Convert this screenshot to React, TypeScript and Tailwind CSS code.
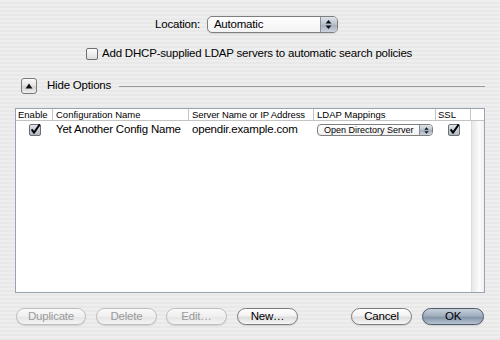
import React from "react";

const font = "font-['Liberation_Sans',Arial,sans-serif]";

function CheckBox({ checked = false }: { checked?: boolean }) {
  return (
    <svg width="12" height="12" viewBox="0 0 12 12" className="shrink-0 overflow-visible">
      <defs>
        <linearGradient id={checked ? "cbOn" : "cbOff"} x1="0" y1="0" x2="0" y2="1">
          <stop offset="0" stopColor={checked ? "#e4e8ee" : "#ffffff"} />
          <stop offset="1" stopColor={checked ? "#a9b3c0" : "#dcdcdc"} />
        </linearGradient>
      </defs>
      <rect x="0.5" y="0.5" width="11" height="11" rx="1.5" fill={`url(#${checked ? "cbOn" : "cbOff"})`} stroke="#6f6f6f" />
      {checked && <path d="M2.6 5.4 L5 8.6 L10.8 0.4" fill="none" stroke="#000" strokeWidth="1.9" />}
    </svg>
  );
}

function Arrows({ w = 7, h = 9 }: { w?: number; h?: number }) {
  return (
    <svg width={w} height={h} viewBox="0 0 7 9">
      <path d="M3.5 0 L6.5 3.5 L0.5 3.5 Z" fill="#111" />
      <path d="M3.5 9 L6.5 5.5 L0.5 5.5 Z" fill="#111" />
    </svg>
  );
}

function Button({ label, disabled = false, primary = false, width }: { label: string; disabled?: boolean; primary?: boolean; width: string }) {
  let cls = "border-[#7c7c7c] bg-[linear-gradient(#ffffff,#f2f2f2_45%,#dedede_55%,#f6f6f6)] text-black";
  if (disabled) cls = "border-[#bdbdbd] bg-[linear-gradient(#fafafa,#efefef_50%,#e6e6e6_55%,#f4f4f4)] text-[#9a9a9a]";
  if (primary) cls = "border-[#4f5a68] bg-[linear-gradient(#c6d0dc,#9eacbc_48%,#8394a8_55%,#b6c3d2)] text-black";
  return (
    <div className={`${width} h-[17px] rounded-full border flex items-center justify-center text-[11.5px] tracking-[-0.2px] leading-none shadow-[0_1px_1px_rgba(0,0,0,0.12)] ${cls}`}>
      {label}
    </div>
  );
}

export default function App() {
  return (
    <div className={`${font} w-[500px] h-[340px] overflow-hidden bg-[repeating-linear-gradient(#eeeeee_0px,#eeeeee_2px,#e8e8e8_2px,#e8e8e8_4px)] text-black`}>
      <div className="flex items-center pl-[155px] pt-[16px]">
        <span className="text-[11.5px] tracking-[-0.2px] leading-none">Location:</span>
        <div className="ml-[7px] w-[131px] h-[17px] rounded-[5px] border border-[#7e7e7e] bg-[linear-gradient(#ffffff,#f3f3f3)] flex items-stretch overflow-hidden shadow-[0_1px_1px_rgba(0,0,0,0.1)]">
          <span className="flex-1 pl-[6px] text-[11.5px] tracking-[-0.2px] leading-[15px]">Automatic</span>
          <div className="w-[17px] border-l border-[#8a8f96] bg-[linear-gradient(#dfe4ea,#b7c0cb_50%,#a6b0bd_55%,#ccd4dd)] flex items-center justify-center">
            <Arrows />
          </div>
        </div>
      </div>

      <div className="flex items-center gap-[4px] pl-[86px] mt-[15px] h-[12px]">
        <CheckBox />
        <span className="text-[11.5px] tracking-[-0.2px] leading-none whitespace-nowrap">Add DHCP-supplied LDAP servers to automatic search policies</span>
      </div>

      <div className="flex items-center pl-[21px] pr-[15px] mt-[18px] h-[16px]">
        <div className="w-[16px] h-[16px] rounded-[3px] border border-[#7a7a7a] bg-[linear-gradient(#fbfbfb,#e2e2e2_50%,#d2d2d2_55%,#efefef)] flex items-center justify-center">
          <svg width="8" height="6" viewBox="0 0 8 6">
            <path d="M4 0.5 L7.5 5.5 L0.5 5.5 Z" fill="#111" />
          </svg>
        </div>
        <span className="ml-[10px] text-[11.5px] tracking-[-0.2px] leading-none">Hide Options</span>
        <div className="ml-[8px] flex-1 h-px bg-[#9a9a9a]" />
      </div>

      <div className="ml-[15px] mt-[14px] w-[470px] h-[185px] border border-[#97a3b3] bg-white flex flex-col">
        <div className="grid grid-cols-[37px_136px_125px_122px_35px_13px] h-[12px] border-b border-[#c4c4c4] text-[9.5px] leading-[11px] text-black">
          <div className="border-r border-[#c4c4c4] pl-[2px] whitespace-nowrap overflow-hidden">Enable</div>
          <div className="border-r border-[#c4c4c4] pl-[3px] whitespace-nowrap overflow-hidden">Configuration Name</div>
          <div className="border-r border-[#c4c4c4] pl-[3px] whitespace-nowrap overflow-hidden tracking-[-0.1px]">Server Name or IP Address</div>
          <div className="border-r border-[#c4c4c4] pl-[3px] whitespace-nowrap overflow-hidden">LDAP Mappings</div>
          <div className="border-r border-[#c4c4c4] pl-[2px] whitespace-nowrap overflow-hidden">SSL</div>
          <div />
        </div>
        <div className="flex flex-1">
          <div className="flex-1">
            <div className="grid grid-cols-[37px_136px_125px_122px_35px] h-[18px] items-center text-[11.5px] tracking-[-0.2px] leading-none">
              <div className="flex justify-center pl-[1px]"><CheckBox checked /></div>
              <div className="pl-[3px] whitespace-nowrap overflow-hidden">Yet Another Config Name</div>
              <div className="pl-[3px] whitespace-nowrap overflow-hidden">opendir.example.com</div>
              <div className="pl-[3px]">
                <div className="w-[116px] h-[12px] rounded-[4px] border border-[#7e7e7e] bg-[linear-gradient(#ffffff,#f0f0f0)] flex items-stretch overflow-hidden">
                  <span className="flex-1 pl-[6px] text-[9px] tracking-normal leading-[10px] whitespace-nowrap">Open Directory Server</span>
                  <div className="w-[13px] border-l border-[#8a8f96] bg-[linear-gradient(#dfe4ea,#b7c0cb_50%,#a6b0bd_55%,#ccd4dd)] flex items-center justify-center">
                    <Arrows w={5} h={7} />
                  </div>
                </div>
              </div>
              <div className="flex justify-center pl-[1px]"><CheckBox checked /></div>
            </div>
          </div>
          <div className="w-[13px] border-l border-[#dcdcdc] bg-[linear-gradient(90deg,#e8e8e8,#fbfbfb_60%,#f0f0f0)]" />
        </div>
      </div>

      <div className="flex items-center pl-[16px] mt-[15px]">
        <Button label="Duplicate" disabled width="w-[70px]" />
        <div className="w-[10px]" />
        <Button label="Delete" disabled width="w-[61px]" />
        <div className="w-[9px]" />
        <Button label="Edit…" disabled width="w-[61px]" />
        <div className="w-[10px]" />
        <Button label="New…" width="w-[61px]" />
        <div className="w-[53px]" />
        <Button label="Cancel" width="w-[61px]" />
        <div className="w-[10px]" />
        <Button label="OK" primary width="w-[62px]" />
      </div>
    </div>
  );
}
